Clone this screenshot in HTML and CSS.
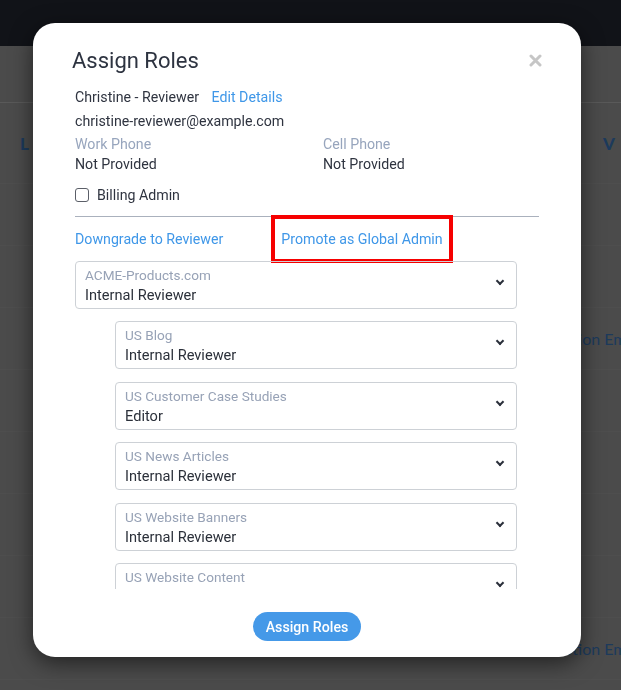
FILE: index.html
```html
<!DOCTYPE html>
<html lang="en">
<head>
  <meta charset="UTF-8" />
  <meta name="viewport" content="width=device-width, initial-scale=1.0"/>
  <title>Assign Roles</title>
  <link rel="stylesheet" href="styles.css">
</head>
<body>

  <div class="page">
    <div class="topbar"></div>
    <div class="subbar"></div>
    <div class="table-head">
      <span class="col-left">L</span>
      <span class="col-right">V</span>
    </div>
    <div class="row"></div>
    <div class="row"></div>
    <div class="row"><span class="cell-email">Promotion Email</span></div>
    <div class="row"></div>
    <div class="row"></div>
    <div class="row"></div>
    <div class="row"></div>
    <div class="row"><span class="cell-email">Promotion Email</span></div>
  </div>

  <div class="modal">
    <div class="modal-header">
      <h2>Assign Roles</h2>
      <span class="close">
        <svg width="13" height="13" viewBox="0 0 13 13"><path d="M2 2 L11 11 M11 2 L2 11" stroke="#c6c6c6" stroke-width="3" stroke-linecap="round"/></svg>
      </span>
    </div>

    <div class="modal-body">
      <div class="user-line">Christine - Reviewer <a href="#" class="link">Edit Details</a></div>
      <div class="user-line">christine-reviewer@example.com</div>

      <div class="phones">
        <div>
          <div class="field-label">Work Phone</div>
          <div class="field-value">Not Provided</div>
        </div>
        <div>
          <div class="field-label">Cell Phone</div>
          <div class="field-value">Not Provided</div>
        </div>
      </div>

      <label class="check"><span class="box"></span>Billing Admin</label>

      <hr class="divider">

      <div class="actions">
        <a href="#" class="link">Downgrade to Reviewer</a>
        <a href="#" class="link highlight">Promote as Global Admin</a>
      </div>

      <div class="roles">
        <div class="select">
          <div class="select-label">ACME-Products.com</div>
          <div class="select-value">Internal Reviewer</div>
          <span class="chevron"></span>
        </div>

        <div class="sub-roles">
          <div class="select">
            <div class="select-label">US Blog</div>
            <div class="select-value">Internal Reviewer</div>
            <span class="chevron"></span>
          </div>
          <div class="select">
            <div class="select-label">US Customer Case Studies</div>
            <div class="select-value">Editor</div>
            <span class="chevron"></span>
          </div>
          <div class="select">
            <div class="select-label">US News Articles</div>
            <div class="select-value">Internal Reviewer</div>
            <span class="chevron"></span>
          </div>
          <div class="select">
            <div class="select-label">US Website Banners</div>
            <div class="select-value">Internal Reviewer</div>
            <span class="chevron"></span>
          </div>
          <div class="select">
            <div class="select-label">US Website Content</div>
            <div class="select-value">Internal Reviewer</div>
            <span class="chevron"></span>
          </div>
        </div>
      </div>
    </div>

    <div class="modal-footer">
      <button class="btn">Assign Roles</button>
    </div>
  </div>

</body>
</html>
```

FILE: styles.css
```css
body {
  margin: 0;
  background-color: #4b4b4b;
  font-family: Roboto, 'Liberation Sans', sans-serif;
  color: #2f3440;
  overflow: hidden;
}

/* page behind the overlay */
.topbar {
  height: 46px;
  background-color: #111318;
}

.subbar {
  height: 56px;
  border-bottom: 1px solid #595959;
}

.table-head {
  height: 80px;
  display: flex;
  justify-content: space-between;
  align-items: center;
  padding: 0 6px 0 20px;
  font-family: Lato, 'Open Sans', sans-serif;
  font-weight: 900;
  font-size: 17px;
  color: #1c3a5c;
  border-bottom: 1px solid #4e4e4e;
}

.row {
  height: 61px;
  border-bottom: 1px solid #4e4e4e;
  display: flex;
  align-items: center;
  justify-content: flex-end;
}

.cell-email {
  font-family: Lato, 'Open Sans', sans-serif;
  font-size: 16px;
  color: #1c3a5c;
  white-space: nowrap;
  margin-right: -21px;
}

/* modal */
.modal {
  position: fixed;
  top: 23px;
  left: 33px;
  width: 548px;
  height: 634px;
  box-sizing: border-box;
  background-color: white;
  border-radius: 22px;
  box-shadow: 0 6px 22px rgba(0,0,0,0.55);
  display: flex;
  flex-direction: column;
}

.modal-header {
  display: flex;
  justify-content: space-between;
  align-items: center;
  padding: 24px 39px 0 39px;
}

.modal-header h2 {
  margin: 0;
  font-size: 22px;
  font-weight: 400;
  line-height: 28px;
  color: #2d3340;
}

.close {
  display: flex;
  margin-top: -2px;
  cursor: pointer;
}

.modal-body {
  padding: 10px 42px 0 42px;
  font-size: 14.2px;
}

.user-line {
  line-height: 24px;
}

.link {
  color: #3f97e8;
  text-decoration: none;
}

.user-line .link {
  margin-left: 9px;
}

.phones {
  display: grid;
  grid-template-columns: 248px 1fr;
  margin-top: 1px;
}

.field-label {
  line-height: 20px;
  color: #97a5bd;
}

.field-value {
  line-height: 20px;
}

.check {
  display: flex;
  align-items: center;
  height: 20px;
  margin-top: 11px;
}

.check .box {
  width: 12px;
  height: 12px;
  border: 1px solid #5b5f68;
  border-radius: 3px;
  margin-right: 8px;
}

.divider {
  border: none;
  border-top: 1px solid #aab1bd;
  margin: 11px 0 0 0;
}

.actions {
  display: flex;
  gap: 58px;
  line-height: 20px;
  margin-top: 12px;
}

.highlight {
  position: relative;
}

.highlight::after {
  content: "";
  position: absolute;
  top: -14px;
  bottom: -14px;
  left: -10px;
  right: -10px;
  border: 4px solid #f60000;
}

.roles {
  margin-top: 12px;
  width: 442px;
  height: 328px;
  overflow: hidden;
}

.select {
  position: relative;
  height: 48px;
  box-sizing: border-box;
  border: 1px solid #cdd1d6;
  border-radius: 4px;
  padding: 4px 9px 2px;
}

.select-label {
  font-size: 13.6px;
  line-height: 18px;
  color: #97a2b6;
}

.select-value {
  font-size: 14.6px;
  line-height: 22px;
  color: #2b303a;
}

.chevron {
  position: absolute;
  right: 13px;
  top: 16px;
  width: 4px;
  height: 4px;
  border-right: 2px solid #2b303b;
  border-bottom: 2px solid #2b303b;
  transform: rotate(45deg);
}

.sub-roles {
  display: flex;
  flex-direction: column;
  gap: 12.5px;
  margin-top: 12px;
  padding-left: 40px;
}

.modal-footer {
  display: flex;
  justify-content: center;
  padding-top: 23px;
}

.btn {
  background-color: #4599e8;
  color: white;
  border: none;
  height: 29px;
  padding: 0 13px;
  border-radius: 15px;
  font-family: Roboto, 'Liberation Sans', sans-serif;
  font-size: 14.2px;
  font-weight: 500;
  cursor: pointer;
}
```
